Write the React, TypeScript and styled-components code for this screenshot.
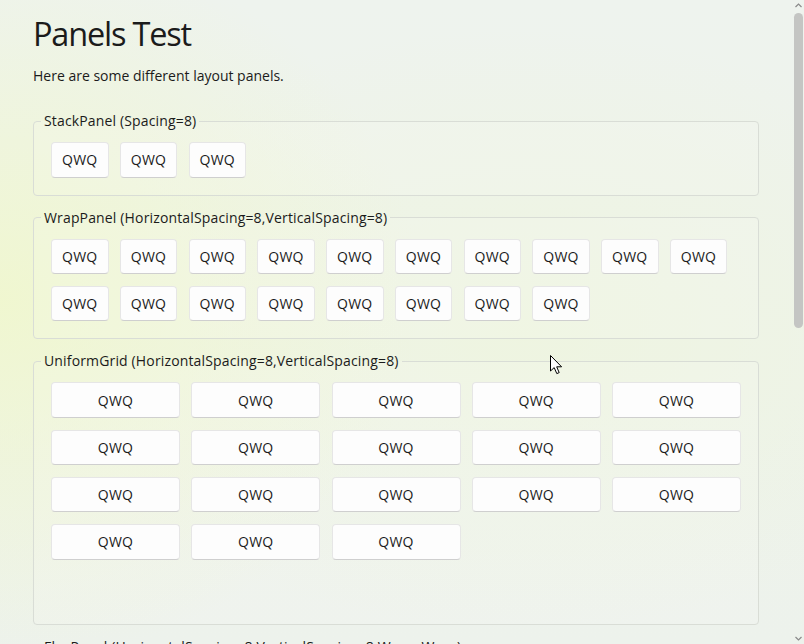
import React from "react";
import styled, { createGlobalStyle } from "styled-components";

const Global = createGlobalStyle`
  html, body { margin: 0; padding: 0; }
  body {
    font-family: "Open Sans", "Noto Sans", sans-serif;
    color: #1b1b1b;
    overflow: hidden;
  }
`;

const Window = styled.div`
  position: relative;
  width: 804px;
  height: 644px;
  overflow: hidden;
  display: flex;
  background:
    radial-gradient(ellipse 420px 360px at 0px 300px, rgba(240, 247, 205, 0.9), rgba(240, 247, 205, 0) 100%),
    radial-gradient(ellipse 500px 300px at 520px 330px, rgba(238, 245, 222, 0.8), rgba(238, 245, 222, 0) 100%),
    linear-gradient(180deg, #eef3ee 0%, #eef3ea 60%, #edf2ec 100%);
`;

const Content = styled.main`
  flex: 1;
  padding: 14px 33px 0 33px;
  display: flex;
  flex-direction: column;
`;

const Title = styled.h1`
  margin: 0;
  font-size: 32.5px;
  line-height: 40px;
  font-weight: 400;
  letter-spacing: -1.2px;
`;

const Subtitle = styled.p`
  margin: 12px 0 25px 0;
  font-size: 14px;
  line-height: 20px;
`;

const Groups = styled.div`
  display: flex;
  flex-direction: column;
  gap: 12px;
`;

const Group = styled.fieldset`
  margin: 0;
  min-width: 0;
  border: 1px solid #d9ddd6;
  border-radius: 4px;
  padding: 11px 17px 17px 17px;
  background: rgba(255, 255, 255, 0.12);
`;

const Legend = styled.legend`
  margin-left: -10px;
  padding: 0 3px;
  font-size: 14px;
  line-height: 20px;
  letter-spacing: 0.15px;
`;

const Stack = styled.div`
  display: flex;
  gap: 11.25px;
`;

const Wrap = styled.div`
  display: flex;
  flex-wrap: wrap;
  column-gap: 11.25px;
  row-gap: 11.8px;
`;

const Uniform = styled.div<{ $cols: number; $rows: number }>`
  display: grid;
  grid-template-columns: repeat(${(p) => p.$cols}, 1fr);
  grid-template-rows: repeat(${(p) => p.$rows}, 35.5px);
  column-gap: 11.25px;
  row-gap: 11.8px;
`;

const Button = styled.button<{ $fill?: boolean }>`
  box-sizing: border-box;
  width: ${(p) => (p.$fill ? "auto" : "57.5px")};
  height: 35.5px;
  padding: 0;
  font-family: inherit;
  font-size: 14px;
  letter-spacing: 0.3px;
  color: #1b1b1b;
  background: #fdfdfd;
  border: 1px solid #e6e6e6;
  border-bottom-color: #cfcfcf;
  border-radius: 4px;
  display: flex;
  align-items: center;
  justify-content: center;
`;

const ScrollTrack = styled.div`
  width: 12px;
  display: flex;
  flex-direction: column;
  align-items: flex-end;
  padding: 2px 0;
  box-sizing: border-box;
`;

const Arrow = styled.svg`
  width: 9px;
  height: 7px;
  margin-right: 1px;
`;

const Thumb = styled.div`
  width: 9px;
  height: 315px;
  margin-top: 4px;
  margin-right: 1px;
  border-radius: 5px;
  background: #c4c5c3;
`;

const TrackSpace = styled.div`
  flex: 1;
`;

const Cursor = styled.svg`
  position: absolute;
  left: 550px;
  top: 355px;
  width: 13px;
  height: 20px;
`;

const q = (n: number) => Array.from({ length: n }, (_, i) => i);

export default function App() {
  return (
    <>
      <Global />
      <Window>
        <Content>
          <Title>Panels Test</Title>
          <Subtitle>Here are some different layout panels.</Subtitle>
          <Groups>
            <Group>
              <Legend>StackPanel (Spacing=8)</Legend>
              <Stack>
                {q(3).map((i) => (
                  <Button key={i}>QWQ</Button>
                ))}
              </Stack>
            </Group>
            <Group>
              <Legend>WrapPanel (HorizontalSpacing=8,VerticalSpacing=8)</Legend>
              <Wrap>
                {q(18).map((i) => (
                  <Button key={i}>QWQ</Button>
                ))}
              </Wrap>
            </Group>
            <Group>
              <Legend>UniformGrid (HorizontalSpacing=8,VerticalSpacing=8)</Legend>
              <Uniform $cols={5} $rows={5}>
                {q(18).map((i) => (
                  <Button key={i} $fill>
                    QWQ
                  </Button>
                ))}
              </Uniform>
            </Group>
            <Group>
              <Legend>FlexPanel (HorizontalSpacing=8,VerticalSpacing=8,Wrap=Wrap)</Legend>
              <Wrap>
                {q(6).map((i) => (
                  <Button key={i}>QWQ</Button>
                ))}
              </Wrap>
            </Group>
          </Groups>
        </Content>
        <ScrollTrack>
          <Arrow viewBox="0 0 9 7">
            <path d="M1.5 5 L4.5 2 L7.5 5" stroke="#8a8a8a" strokeWidth="1.2" fill="none" />
          </Arrow>
          <Thumb />
          <TrackSpace />
          <Arrow viewBox="0 0 9 7">
            <path d="M1.5 2 L4.5 5 L7.5 2" stroke="#8a8a8a" strokeWidth="1.2" fill="none" />
          </Arrow>
        </ScrollTrack>
        <Cursor viewBox="0 0 13 20">
          <path
            d="M0.5 0.5 L0.5 16 L4.2 12.6 L6.8 18.6 L9.2 17.6 L6.7 11.8 L11.6 11.8 Z"
            fill="#ffffff"
            stroke="#000000"
            strokeWidth="1"
            strokeLinejoin="round"
          />
        </Cursor>
      </Window>
    </>
  );
}
